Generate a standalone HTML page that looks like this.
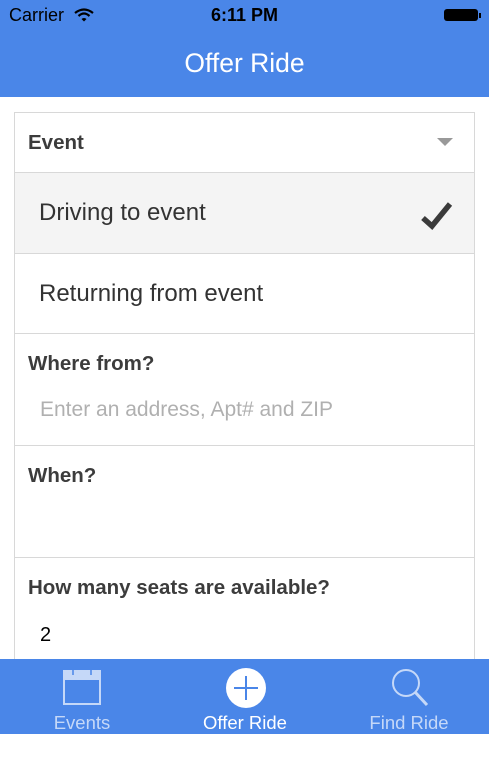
<!DOCTYPE html>
<html><head><style>
body{margin:0;width:489px;height:734px;overflow:hidden;background:#fff;font-family:"Liberation Sans",sans-serif;position:relative}
.nav{position:absolute;left:0;top:0;width:489px;height:97px;background:#4a86e8}
.abs{position:absolute}
.card{position:absolute;left:14px;top:112px;width:459px;height:600px;border:1px solid #d8d8d8;border-bottom:none}
.row{position:absolute;left:0;width:459px;border-bottom:1px solid #d8d8d8}
.lbl{position:absolute;left:13px;font-weight:bold;font-size:20.5px;color:#3c3c3c}
.tab{position:absolute;left:0;top:659px;width:489px;height:75px;background:#4a86e8}
</style></head><body>
<div class="nav">
<div class="abs" style="left:9px;top:5px;font-size:18px;color:#000">Carrier</div>
<svg class="abs" style="left:74px;top:8px" width="20" height="14" viewBox="0 0 20 14"><path d="M1 5 Q10 -2 19 5" stroke="#000" stroke-width="2.2" fill="none"/><path d="M4.5 8 Q10 3 15.5 8" stroke="#000" stroke-width="2.2" fill="none"/><path d="M7.5 11 L10 13.5 L12.5 11 Q10 9 7.5 11Z" fill="#000"/></svg>
<div class="abs" style="left:0;width:489px;text-align:center;top:5px;font-size:18px;font-weight:bold;color:#000">6:11 PM</div>
<div class="abs" style="left:444px;top:9px;width:34px;height:12px;background:#000;border-radius:3px"></div>
<div class="abs" style="left:479px;top:13px;width:2px;height:5px;background:#000"></div>
<div class="abs" style="left:0;width:489px;text-align:center;top:48px;font-size:26.5px;color:#fff">Offer Ride</div>
</div>
<div class="card">
<div class="row" style="top:0;height:59px"><div class="lbl" style="top:18px">Event</div>
<div class="abs" style="left:422px;top:25px;width:0;height:0;border-left:8px solid transparent;border-right:8px solid transparent;border-top:8px solid #999"></div></div>
<div class="row" style="top:60px;height:80px;background:#f4f4f4"><div class="abs" style="left:24px;top:26px;font-size:24px;color:#333">Driving to event</div>
<svg class="abs" style="left:405px;top:28px" width="34" height="30" viewBox="0 0 34 30"><path d="M3 17 L12 25 L30 3" stroke="#3a3a3a" stroke-width="5.5" fill="none"/></svg></div>
<div class="row" style="top:141px;height:79px"><div class="abs" style="left:24px;top:26px;font-size:24px;color:#333">Returning from event</div></div>
<div class="row" style="top:221px;height:111px"><div class="lbl" style="top:18px">Where from?</div>
<div class="abs" style="left:25px;top:64px;font-size:21px;color:#b0b0b0">Enter an address, Apt# and ZIP</div></div>
<div class="row" style="top:333px;height:111px"><div class="lbl" style="top:18px">When?</div></div>
<div class="row" style="top:445px;height:200px;border:none"><div class="lbl" style="top:18px">How many seats are available?</div>
<div class="abs" style="left:25px;top:66px;font-size:20px;color:#000">2</div></div>
</div>
<div class="tab">
<svg class="abs" style="left:63px;top:10px" width="38" height="36" viewBox="0 0 38 36"><rect x="1" y="2" width="36" height="33" fill="none" stroke="#c5d8f8" stroke-width="2"/><rect x="1" y="2" width="36" height="9" fill="#c5d8f8"/><path d="M10 0V6M28 0V6" stroke="#4a86e8" stroke-width="1.5"/></svg>
<div class="abs" style="left:30px;width:104px;text-align:center;top:53px;font-size:18.5px;color:#c5d8f8">Events</div>
<svg class="abs" style="left:225px;top:8px" width="42" height="42" viewBox="0 0 42 42"><circle cx="21" cy="21" r="20" fill="#fff"/><path d="M21 9V33M9 21H33" stroke="#4a86e8" stroke-width="2"/></svg>
<div class="abs" style="left:180px;width:130px;text-align:center;top:53px;font-size:18.5px;color:#fff">Offer Ride</div>
<svg class="abs" style="left:389px;top:8px" width="42" height="42" viewBox="0 0 42 42"><circle cx="17" cy="16" r="13" fill="none" stroke="#c5d8f8" stroke-width="2"/><path d="M26 25L38 38" stroke="#c5d8f8" stroke-width="3"/></svg>
<div class="abs" style="left:350px;width:118px;text-align:center;top:53px;font-size:18.5px;color:#c5d8f8">Find Ride</div>
</div>
</body></html>
